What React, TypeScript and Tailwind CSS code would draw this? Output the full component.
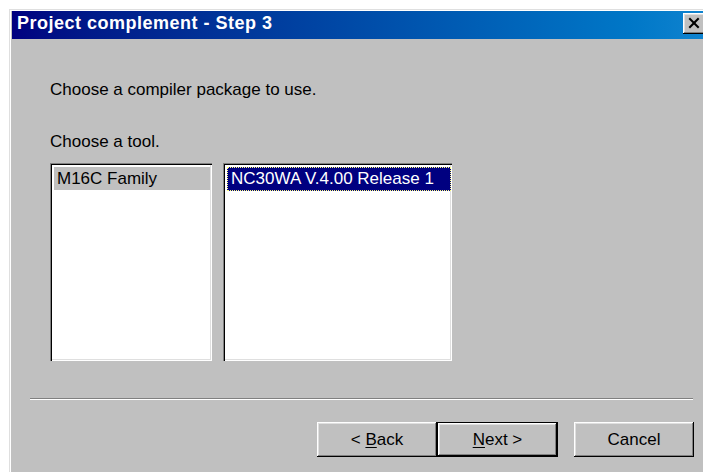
import { X } from "lucide-react";

const raised =
  "shadow-[inset_-1px_-1px_0_#000,inset_1px_1px_0_#fff,inset_-2px_-2px_0_#808080,inset_2px_2px_0_#dfdfdf]";
const sunken =
  "shadow-[inset_1px_1px_0_#808080,inset_2px_2px_0_#000,inset_-1px_-1px_0_#fff,inset_-2px_-2px_0_#dfdfdf]";

const WizardButton = ({
  children,
  isDefault = false,
}: {
  children: React.ReactNode;
  isDefault?: boolean;
}) => {
  if (isDefault) {
    return (
      <div className="w-[121px] h-[35px] border border-black">
        <button className={`w-full h-full flex items-center justify-center text-[17px] text-black ${raised}`}>
          {children}
        </button>
      </div>
    );
  }
  return (
    <button className={`w-[120px] h-[35px] flex items-center justify-center text-[17px] text-black ${raised}`}>
      {children}
    </button>
  );
};

export default function App() {
  return (
    <div className="w-[703px] h-[472px] bg-white overflow-hidden pt-[9px] pl-[9px] font-['Liberation_Sans',Arial,sans-serif]">
      <div className="w-[700px] h-[470px] border-t border-l border-[#dfdfdf]">
        <div className="w-full h-full border-t border-l border-white bg-[#c0c0c0] pl-[1px]">
          {/* caption */}
          <div className="h-[28px] flex items-start justify-between pt-[2px] pl-[5px] pr-[4px] bg-gradient-to-r from-[#000080] to-[#1084d0]">
            <span className="text-white font-bold text-[18px] leading-[20px] tracking-[0.5px]">
              Project complement - Step 3
            </span>
            <button className={`w-[22px] h-[21px] bg-[#c0c0c0] flex items-center justify-center pb-[1px] ${raised}`}>
              <X size={16} strokeWidth={3} className="text-black" strokeLinecap="square" />
            </button>
          </div>

          <div className="pl-[38px] text-black">
            <p className="mt-[41px] text-[17px] leading-[20px]">Choose a compiler package to use.</p>
            <p className="mt-[32px] text-[17px] leading-[20px]">Choose a tool.</p>

            <div className="mt-[11px] flex gap-[11px]">
              <div className={`w-[162px] h-[198px] bg-white pt-[4px] pl-[4px] pr-[2px] ${sunken}`}>
                <div className="h-[23px] leading-[23px] bg-[#c0c0c0] pl-[3px] text-[17px]">M16C Family</div>
              </div>
              <div className={`w-[229px] h-[198px] bg-white pt-[4px] pl-[4px] pr-[1px] ${sunken}`}>
                <div className="h-[24px] leading-[22px] bg-[#000080] border border-dotted border-[#ffff7f] pl-[3px] text-[17px] text-white">
                  NC30WA V.4.00 Release 1
                </div>
              </div>
            </div>
          </div>

          <div className="mt-[37px] ml-[18px] w-[663px] border-t border-t-[#808080] border-b border-b-white" />

          <div className="mt-[22px] ml-[305px] flex">
            <WizardButton>
              &lt;&nbsp;<u className="underline-offset-2">B</u>ack
            </WizardButton>
            <WizardButton isDefault>
              <u className="underline-offset-2">N</u>ext&nbsp;&gt;
            </WizardButton>
            <div className="ml-[16px]">
              <WizardButton>Cancel</WizardButton>
            </div>
          </div>
        </div>
      </div>
    </div>
  );
}
